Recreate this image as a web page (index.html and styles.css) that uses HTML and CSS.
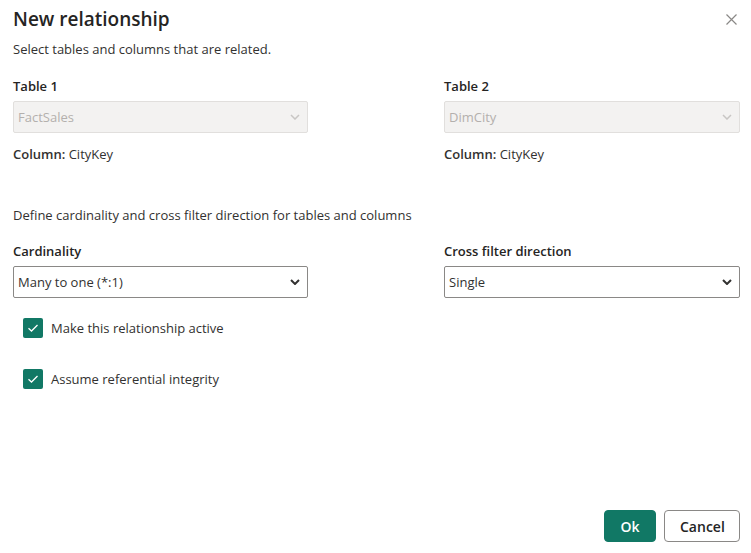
FILE: index.html
```html
<!DOCTYPE html>
<html>
<head>
<meta charset="utf-8">
<link rel="stylesheet" href="styles.css">
</head>
<body>
<div class="dialog">
  <div class="header">
    <h1 class="title">New relationship</h1>
    <button class="close" aria-label="Close">
      <svg width="11" height="11" viewBox="0 0 11 11"><path d="M0.5 0.5 L10.5 10.5 M10.5 0.5 L0.5 10.5" stroke="#8a8886" stroke-width="1.2" fill="none"/></svg>
    </button>
  </div>
  <p class="subtitle">Select tables and columns that are related.</p>

  <div class="pair tables">
    <div class="field">
      <div class="label">Table 1</div>
      <div class="select disabled"><span>FactSales</span>
        <svg class="chev" width="10" height="6" viewBox="0 0 10 6"><path d="M1 1 L5 5 L9 1" stroke="#c8c6c4" stroke-width="1.5" fill="none"/></svg>
      </div>
      <div class="column"><b>Column:</b> CityKey</div>
    </div>
    <div class="field">
      <div class="label">Table 2</div>
      <div class="select disabled"><span>DimCity</span>
        <svg class="chev" width="10" height="6" viewBox="0 0 10 6"><path d="M1 1 L5 5 L9 1" stroke="#c8c6c4" stroke-width="1.5" fill="none"/></svg>
      </div>
      <div class="column"><b>Column:</b> CityKey</div>
    </div>
  </div>

  <p class="define">Define cardinality and cross filter direction for tables and columns</p>

  <div class="pair opts">
    <div class="field">
      <div class="label">Cardinality</div>
      <div class="select"><span>Many to one (*:1)</span>
        <svg class="chev" width="10" height="6" viewBox="0 0 10 6"><path d="M1 1 L5 5 L9 1" stroke="#323130" stroke-width="2" fill="none"/></svg>
      </div>
    </div>
    <div class="field">
      <div class="label">Cross filter direction</div>
      <div class="select"><span>Single</span>
        <svg class="chev" width="10" height="6" viewBox="0 0 10 6"><path d="M1 1 L5 5 L9 1" stroke="#323130" stroke-width="2" fill="none"/></svg>
      </div>
    </div>
  </div>

  <div class="checks">
    <label class="check"><span class="box"><svg width="12" height="10" viewBox="0 0 12 10"><path d="M1.5 5.2 L4.5 8 L10.5 2" stroke="#fff" stroke-width="1.3" fill="none"/></svg></span>Make this relationship active</label>
    <label class="check"><span class="box"><svg width="12" height="10" viewBox="0 0 12 10"><path d="M1.5 5.2 L4.5 8 L10.5 2" stroke="#fff" stroke-width="1.3" fill="none"/></svg></span>Assume referential integrity</label>
  </div>

  <div class="footer">
    <button class="btn primary">Ok</button>
    <button class="btn">Cancel</button>
  </div>
</div>
</body>
</html>
```

FILE: styles.css
```css
* { box-sizing: border-box; }
html, body { margin: 0; padding: 0; background: #fff; }
body {
  font-family: "Open Sans", "Noto Sans", sans-serif;
  font-size: 13px;
  color: #323130;
}
.dialog {
  height: 553px;
  display: flex;
  flex-direction: column;
  padding: 0 11px 11px 13px;
}
.header {
  display: flex;
  justify-content: space-between;
  align-items: flex-start;
}
.title {
  margin: 5px 0 0;
  font-size: 19px;
  font-weight: 600;
  line-height: 28px;
  color: #252423;
}
.close {
  border: 0;
  background: none;
  padding: 0;
  margin: 14px 3px 0 0;
  width: 11px;
  height: 11px;
  display: flex;
}
.subtitle {
  margin: 6px 0 0;
  line-height: 20px;
}
.pair {
  display: grid;
  grid-template-columns: 295px 296px;
  justify-content: space-between;
}
.tables { margin-top: 17px; }
.label {
  font-weight: 600;
  line-height: 20px;
  color: #252423;
}
.select {
  margin-top: 5px;
  height: 32px;
  border: 1px solid #8a8886;
  border-radius: 2px;
  display: flex;
  align-items: center;
  justify-content: space-between;
  padding: 0 7px 0 4px;
  color: #323130;
}
.select.disabled {
  background: #f3f2f1;
  border-color: #e1dfdd;
  color: #b3b0ad;
}
.column {
  margin-top: 11px;
  line-height: 20px;
}
.column b { font-weight: 600; }
.define {
  margin: 41px 0 0;
  line-height: 20px;
}
.opts { margin-top: 16px; }
.checks {
  display: flex;
  flex-direction: column;
  gap: 31px;
  margin-top: 20px;
  padding-left: 10px;
}
.check {
  display: flex;
  align-items: center;
  gap: 8px;
  line-height: 20px;
}
.box {
  width: 20px;
  height: 20px;
  border-radius: 2px;
  background: #117865;
  display: flex;
  align-items: center;
  justify-content: center;
}
.footer {
  margin-top: auto;
  display: flex;
  justify-content: flex-end;
  gap: 8px;
}
.btn {
  height: 32px;
  min-width: 52px;
  padding: 0 15px;
  border: 1px solid #8a8886;
  border-radius: 4px;
  background: #fff;
  font-family: inherit;
  font-size: 14px;
  font-weight: 600;
  color: #242424;
}
.btn + .btn { width: 76px; }
.primary {
  background: #117865;
  border-color: #117865;
  color: #fff;
}
```
